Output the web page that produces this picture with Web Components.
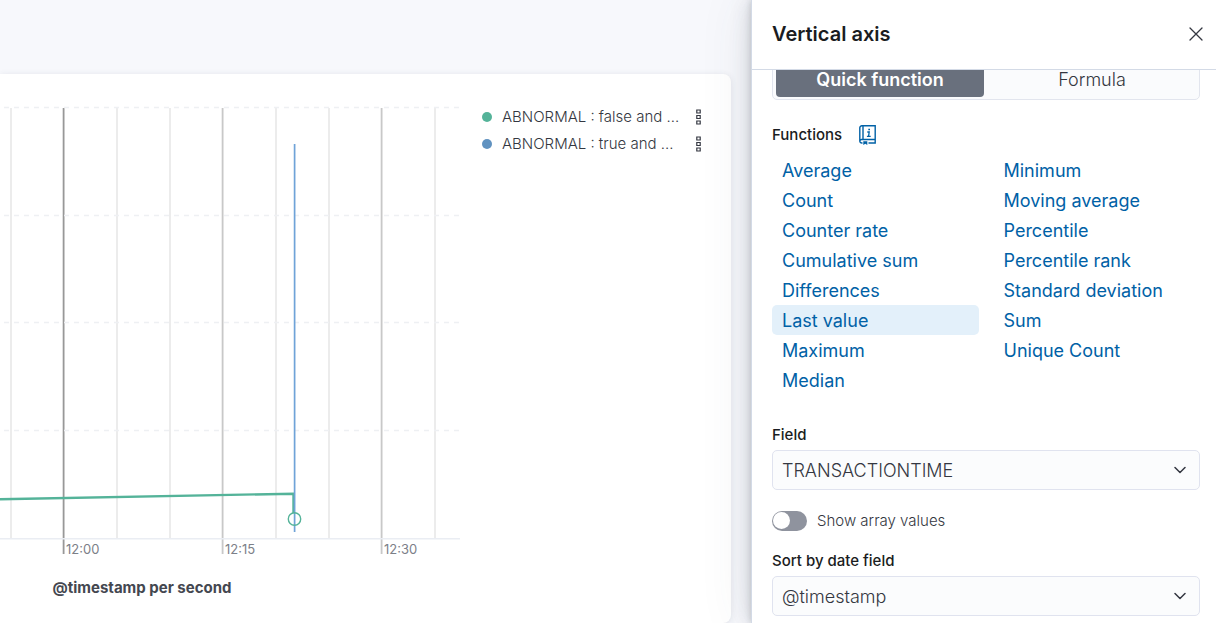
<!DOCTYPE html>
<html lang="en">
<head>
<meta charset="utf-8">
<title>Vertical axis</title>
<style>
  html, body { height: 100%; }
  body {
    margin: 0;
    overflow: hidden;
    font-family: Inter, "Liberation Sans", sans-serif;
    font-weight: 300;
    color: #343741;
    background: #f7f8fc;
  }
</style>
</head>
<body>
<lens-editor>
  <chart-panel slot="workspace">
    <time-chart slot="chart"></time-chart>
    <legend-item slot="legend" color="#54b399">ABNORMAL : false and ...</legend-item>
    <legend-item slot="legend" color="#6092c0">ABNORMAL : true and ...</legend-item>
  </chart-panel>
  <dimension-flyout slot="flyout" heading="Vertical axis">
    <method-tabs></method-tabs>
    <function-picker selected="Last value"></function-picker>
    <field-select label="Field" value="TRANSACTIONTIME"></field-select>
    <toggle-switch label="Show array values"></toggle-switch>
    <field-select label="Sort by date field" value="@timestamp"></field-select>
  </dimension-flyout>
</lens-editor>

<script>
const define = (name, render) => {
  customElements.define(name, class extends HTMLElement {
    connectedCallback() {
      if (this.shadowRoot) return;
      this.attachShadow({ mode: "open" }).innerHTML = render(this);
    }
  });
};

define("lens-editor", () => `
  <style>
    :host { display: flex; height: 100vh; }
    main { flex: 1; min-width: 0; display: flex; }
  </style>
  <main><slot name="workspace"></slot></main>
  <slot name="flyout"></slot>`);

define("chart-panel", () => `
  <style>
    :host { display: flex; flex: 1; min-width: 0; padding: 74px 20px 0 0; }
    section {
      flex: 1; min-width: 0; display: flex; gap: 20px; padding-top: 30px;
      background: #fff; border-radius: 0 8px 8px 0; overflow: hidden;
      box-shadow: 0 1px 6px rgba(60, 65, 85, .12);
    }
    .legend { flex: 1; min-width: 0; padding-right: 20px; margin-top: -1px; }
  </style>
  <section>
    <slot name="chart"></slot>
    <div class="legend"><slot name="legend"></slot></div>
  </section>`);

define("time-chart", () => {
  const minor = [11, 117, 170, 276, 329, 435]
    .map(x => `<path d="M${x} 4V435" stroke="#ececec" stroke-width="2"/>`).join("");
  const major = [[64, "#989898", "12:00"], [223, "#c8c8c8", "12:15"], [382, "#c8c8c8", "12:30"]]
    .map(([x, c, t]) => `<path d="M${x - .4} 4V450" stroke="${c}" stroke-width="1.8"/><text x="${x + 2}" y="450">${t}</text>`).join("");
  const rows = [4, 112, 219, 327]
    .map(y => `<path d="M4 ${y - .5}H460" stroke="#eef0f3" stroke-width="1.5" stroke-dasharray="5 5"/>`).join("");
  return `
  <style>
    :host { display: block; flex: none; width: 460px; }
    svg { display: block; }
    text { font-size: 13px; font-weight: 400; fill: #7c8088; }
    .title { font-size: 15px; font-weight: 700; fill: #444750; }
  </style>
  <svg width="460" height="510" viewBox="0 0 460 510" fill="none" role="img" aria-label="@timestamp per second">
    ${minor}${major}${rows}
    <path d="M0 434.8H460" stroke="#eaedf3" stroke-width="1.5"/>
    <path d="M0 395.3L293.5 389.7V409" stroke="#54b399" stroke-width="2.4"/>
    <path d="M294.6 40V428" stroke="#6fa3d8" stroke-width="1.7"/>
    <circle cx="294.5" cy="415" r="6.2" stroke="#54b399" stroke-width="1.4"/>
    <text class="title" x="142" y="489" text-anchor="middle">@timestamp per second</text>
  </svg>`;
});

define("legend-item", el => `
  <style>
    :host { display: flex; align-items: center; height: 27px; padding-left: 2px; }
    .dot { width: 10px; height: 10px; border-radius: 50%; background: ${el.getAttribute("color")}; margin-right: 10px; }
    .name { flex: 1; font-size: 15px; line-height: 24px; white-space: nowrap; overflow: hidden; }
    button { display: flex; border: 0; padding: 5px 10px; background: none; color: #343741; }
  </style>
  <span class="dot"></span>
  <span class="name"><slot></slot></span>
  <button type="button" aria-label="Legend actions">
    <svg width="5" height="16" viewBox="0 0 5 16" fill="none" stroke="currentColor" stroke-width="1.2">
      <path d="M.8 1h3.4v3H.8zM.8 6.5h3.4v3H.8zM.8 12h3.4v3H.8z"/>
    </svg>
  </button>`);

define("dimension-flyout", el => `
  <style>
    :host {
      display: flex; flex-direction: column; flex: 0 0 464px; position: relative;
      background: #fff; border-left: 1px solid #d3dae6;
      box-shadow: 0 0 6px rgba(60, 65, 75, .22), 0 0 20px rgba(70, 75, 90, .2), 0 0 50px rgba(70, 75, 90, .1);
    }
    header {
      display: flex; align-items: center; justify-content: space-between; box-sizing: border-box;
      height: 70px; padding: 0 8px 2px 20px; border-bottom: 1px solid #d3dae6; flex: none;
    }
    h2 { margin: 0; font-size: 20px; line-height: 30px; font-weight: 600; color: #1a1c21; }
    button { display: flex; border: 0; padding: 5px; background: none; color: #343741; }
    .body { flex: 1; min-height: 0; overflow: hidden; }
    .content { display: flex; flex-direction: column; margin-top: -10px; padding: 0 16px 0 20px; }
  </style>
  <header>
    <h2>${el.getAttribute("heading")}</h2>
    <button type="button" aria-label="Close">
      <svg width="14" height="14" viewBox="0 0 14 14" stroke="currentColor" stroke-width="1.3" stroke-linecap="round"><path d="M1 1l12 12M13 1L1 13"/></svg>
    </button>
  </header>
  <div class="body"><div class="content"><slot></slot></div></div>`);

define("method-tabs", () => `
  <style>
    :host {
      display: flex; gap: 4px; box-sizing: border-box; height: 40px; padding: 2px 3px;
      border: 1px solid #e2e5ee; border-radius: 5px; background: #fafbfd;
    }
    button {
      flex: 1; border: 0; border-radius: 4px; background: none; padding: 0;
      font: inherit; font-size: 18px; line-height: 30px; color: #343741;
    }
    .on { background: #69707d; color: #fff; font-weight: 600; }
  </style>
  <button type="button" class="on" aria-pressed="true">Quick function</button>
  <button type="button" aria-pressed="false">Formula</button>`);

define("function-picker", el => {
  const names = ["Average", "Count", "Counter rate", "Cumulative sum", "Differences", "Last value", "Maximum", "Median",
    "Minimum", "Moving average", "Percentile", "Percentile rank", "Standard deviation", "Sum", "Unique Count"];
  const sel = el.getAttribute("selected");
  return `
  <style>
    :host { display: block; padding: 20px 0 1px; }
    .head { display: flex; align-items: center; gap: 13px; height: 30px; margin-bottom: 5px; }
    h3 { margin: 0; font-size: 15px; line-height: 24px; font-weight: 500; color: #1a1c21; }
    .help { display: flex; border: 0; padding: 4px; background: none; color: #0061a6; }
    .list { display: grid; grid-template: repeat(8, 30px) / 1fr 1fr; grid-auto-flow: column; column-gap: 15px; }
    .list button {
      border: 0; border-radius: 5px; background: none; padding: 1px 10px 0; text-align: left;
      font: inherit; font-size: 18px; line-height: 29px; font-weight: 400; color: #0061a6;
    }
    .list .on { background: #e3f0fa; }
  </style>
  <div class="head">
    <h3>Functions</h3>
    <button type="button" class="help" aria-label="Function reference">
      <svg width="17" height="20" viewBox="0 0 17 20" fill="none" stroke="currentColor" stroke-width="1.4">
        <path d="M3.500 18H2.800A2 2 0 0 1 .8 16V2.800A2 2 0 0 1 2.800 .8H16.200V14.500H3A2 2 0 0 0 .8 16M4 .8V14.500M9.500 18H16.200V14.500"/>
        <path d="M8.300 7H10.200L9.600 11.200M7.900 11.300H11.700" stroke-width="1.300"/>
        <path d="M9.300 3.700h1.700v1.600H9.300zM4.300 16.300h4v3.700l-2-1.300-2 1.300z" fill="currentColor" stroke="none"/>
      </svg>
    </button>
  </div>
  <div class="list">
    ${names.map(n => `<button type="button"${n === sel ? ' class="on" aria-pressed="true"' : ""}>${n}</button>`).join("")}
  </div>`;
});

define("field-select", el => `
  <style>
    :host { display: block; }
    :host([label="Field"]) { padding-top: 27px; }
    :host(:last-of-type) { padding-top: 16px; }
    label { display: block; font-size: 15px; line-height: 24px; font-weight: 500; color: #1a1c21; margin-bottom: 3px; }
    .control { display: grid; align-items: center; }
    select, svg { grid-area: 1 / 1; }
    select {
      appearance: none; box-sizing: border-box; width: 100%; height: 40px; margin: 0; padding: 1px 40px 0 9px;
      border: 1px solid #e0e3ef; border-radius: 5px; background: #fbfcfd;
      font: inherit; font-size: 18px; color: #343741;
    }
    svg { justify-self: end; margin-right: 14px; pointer-events: none; }
  </style>
  <label for="field">${el.getAttribute("label")}</label>
  <div class="control">
    <select id="field"><option>${el.getAttribute("value")}</option></select>
    <svg width="12" height="8" viewBox="0 0 12 8" fill="none" stroke="#343741" stroke-width="1.5" stroke-linecap="round" stroke-linejoin="round"><path d="M1 1.500l5 5 5-5"/></svg>
  </div>`);

define("toggle-switch", el => `
  <style>
    :host { display: flex; align-items: center; gap: 10px; height: 24px; padding-top: 19px; }
    input {
      appearance: none; margin: 0; width: 35px; height: 20px; padding: 1px; box-sizing: border-box;
      border-radius: 10px; background: #8f939e; display: flex;
    }
    input::before { content: ""; width: 17px; height: 17px; border-radius: 50%; background: #fff; }
    label { font-size: 15px; line-height: 24px; }
  </style>
  <input type="checkbox" role="switch" id="switch">
  <label for="switch">${el.getAttribute("label")}</label>`);
</script>
</body>
</html>
